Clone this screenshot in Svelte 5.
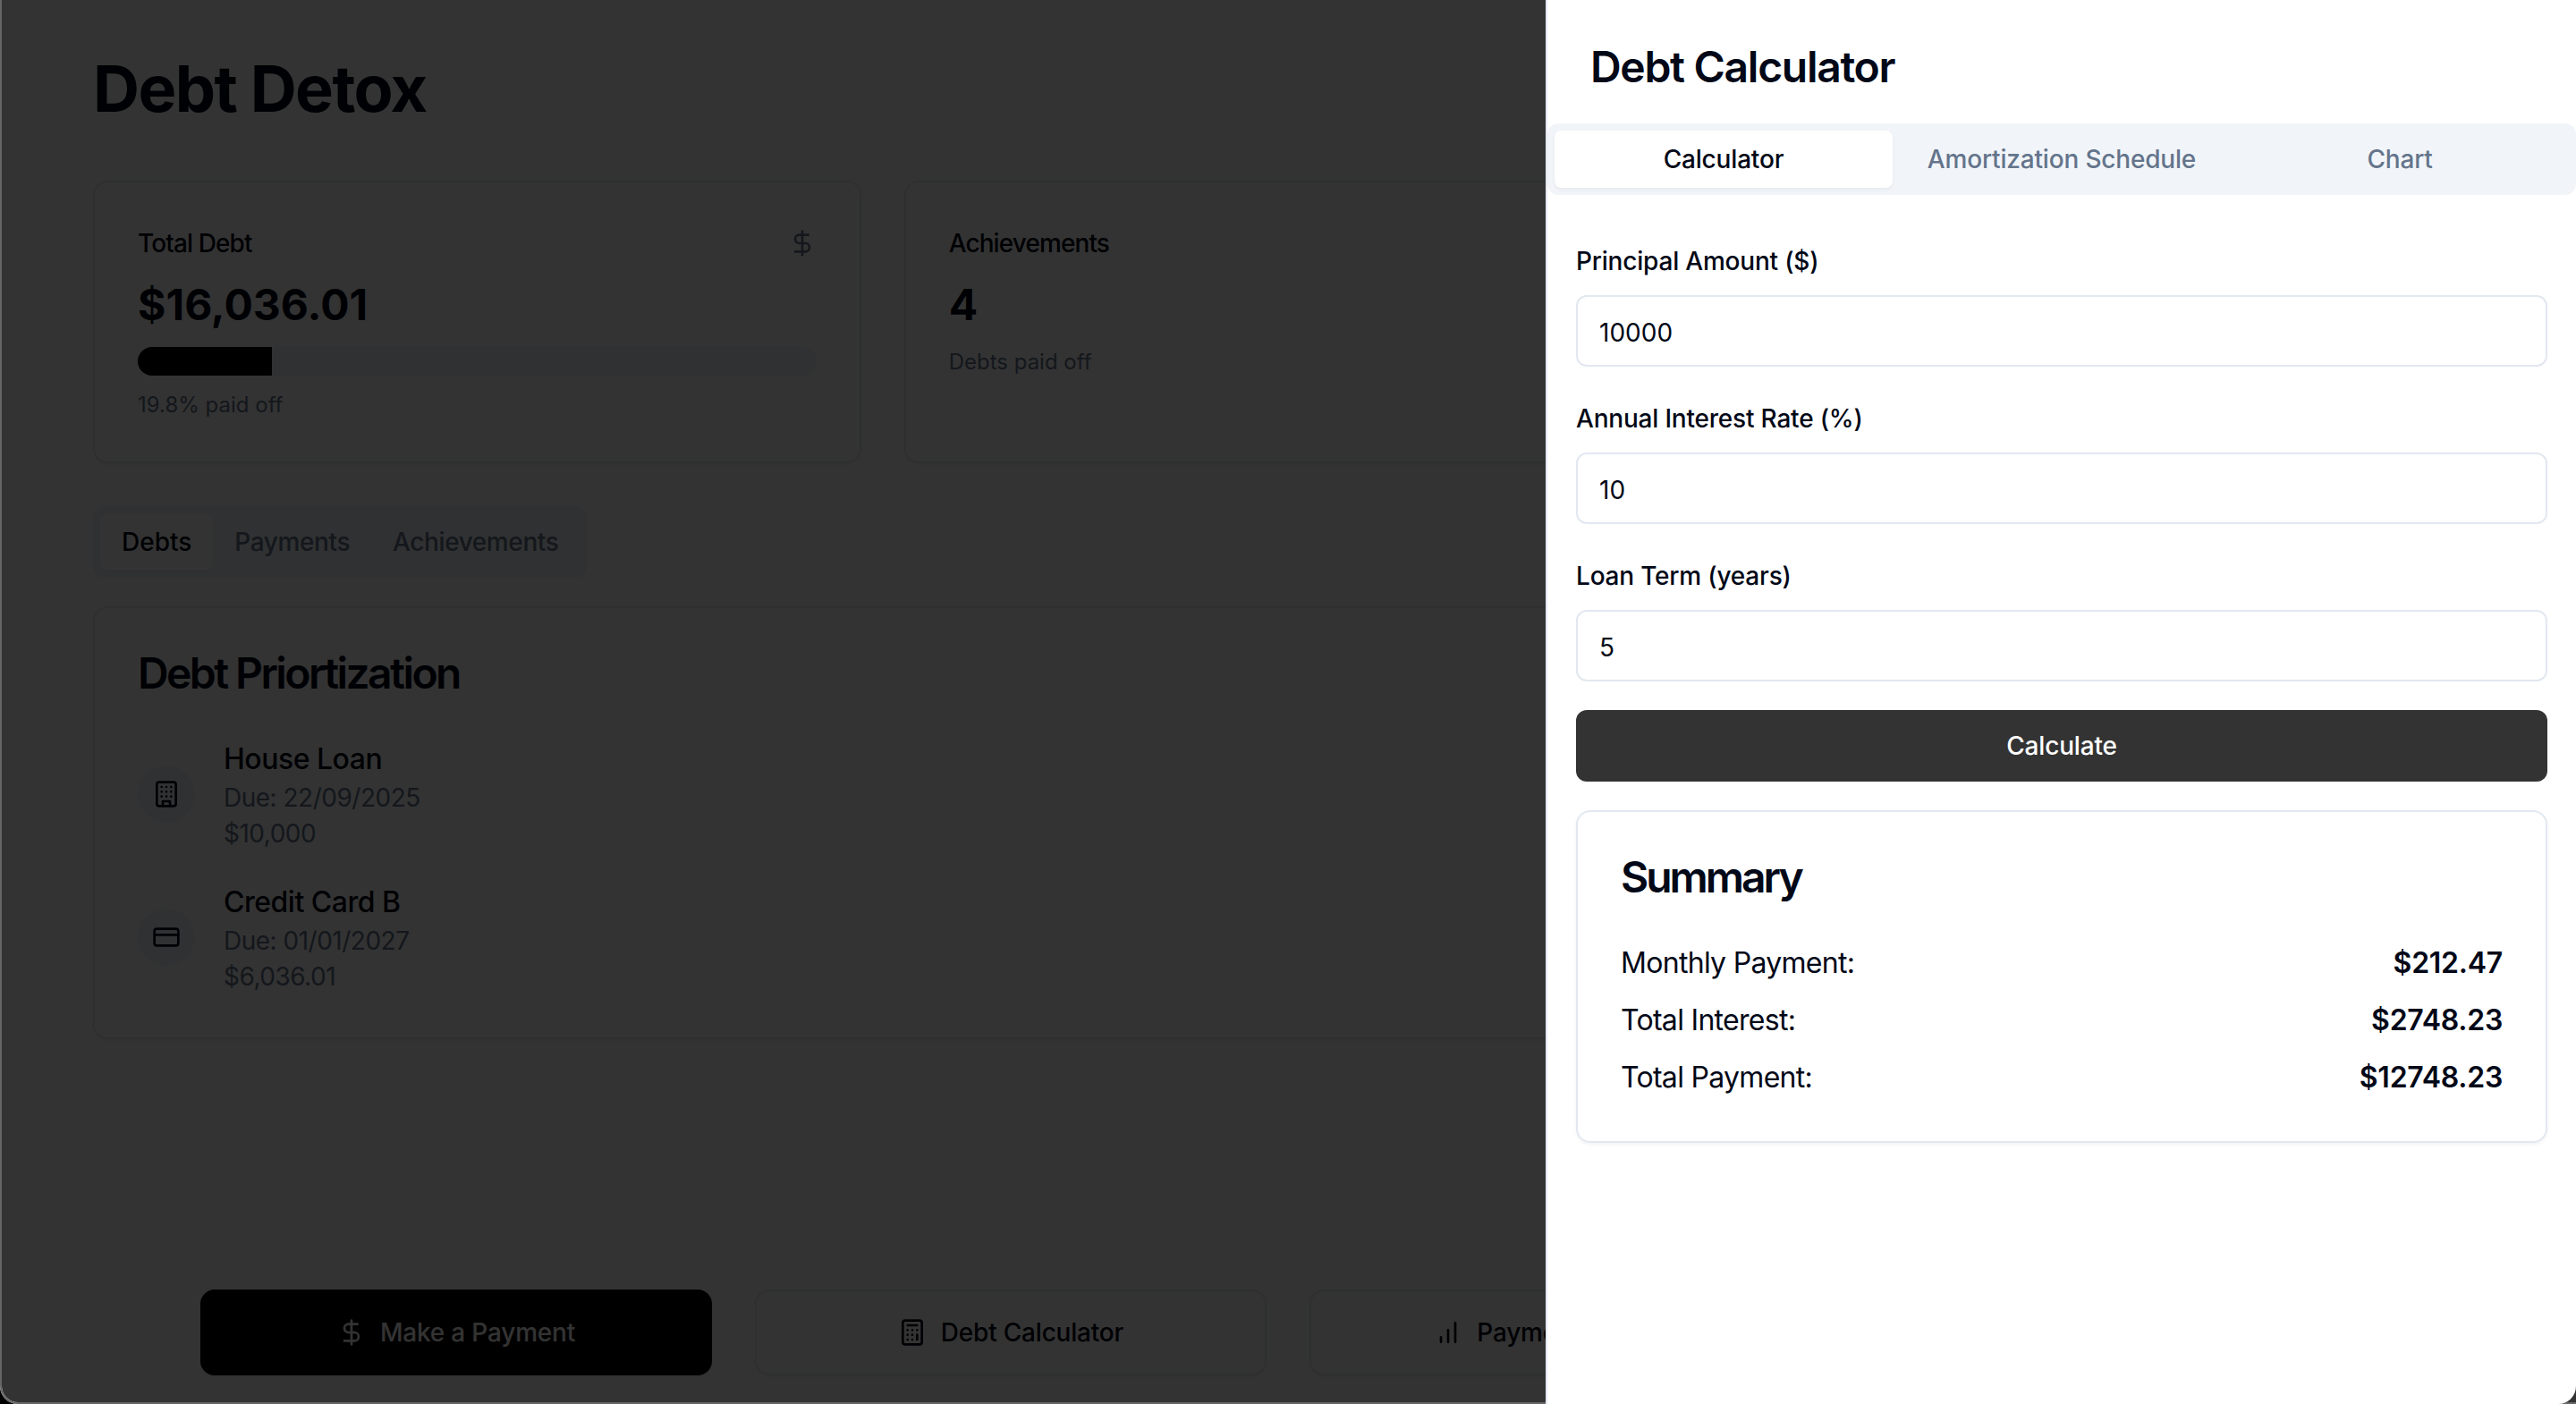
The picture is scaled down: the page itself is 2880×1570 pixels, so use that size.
<script>
  const stats = [
    { label: "Total Debt", value: "$16,036.01", progress: 19.8, note: "19.8% paid off", icon: "dollar" },
    { label: "Achievements", value: "4", note: "Debts paid off" }
  ];

  const debts = [
    { name: "House Loan", due: "22/09/2025", amount: "$10,000", icon: "building" },
    { name: "Credit Card B", due: "01/01/2027", amount: "$6,036.01", icon: "card" }
  ];

  const fields = [
    { label: "Principal Amount ($)", value: "10000" },
    { label: "Annual Interest Rate (%)", value: "10" },
    { label: "Loan Term (years)", value: "5" }
  ];

  const summary = [
    { label: "Monthly Payment:", value: "$212.47" },
    { label: "Total Interest:", value: "$2748.23" },
    { label: "Total Payment:", value: "$12748.23" }
  ];
</script>

{#snippet icon(name)}
  <svg viewBox="0 0 24 24" class="icon" fill="none" stroke="currentColor" stroke-width="2" stroke-linecap="round" stroke-linejoin="round">
    {#if name === "dollar"}
      <line x1="12" y1="2" x2="12" y2="22" />
      <path d="M17 5H9.5a3.5 3.5 0 0 0 0 7h5a3.5 3.5 0 0 1 0 7H6" />
    {:else if name === "building"}
      <rect x="4" y="2" width="16" height="20" rx="2" />
      <path d="M9 22v-4h6v4M8 6h.01M16 6h.01M12 6h.01M12 10h.01M12 14h.01M16 10h.01M16 14h.01M8 10h.01M8 14h.01" />
    {:else if name === "card"}
      <rect x="2" y="5" width="20" height="14" rx="2" />
      <line x1="2" y1="10" x2="22" y2="10" />
    {:else if name === "calculator"}
      <rect x="4" y="2" width="16" height="20" rx="2" />
      <line x1="8" y1="6" x2="16" y2="6" />
      <line x1="16" y1="14" x2="16" y2="18" />
      <path d="M16 10h.01M12 10h.01M8 10h.01M12 14h.01M8 14h.01M12 18h.01M8 18h.01" />
    {:else if name === "chart"}
      <line x1="18" y1="20" x2="18" y2="4" />
      <line x1="12" y1="20" x2="12" y2="10" />
      <line x1="6" y1="20" x2="6" y2="16" />
    {/if}
  </svg>
{/snippet}

<div class="page">
  <main class="main">
    <h1>Debt Detox</h1>

    <section class="stats">
      {#each stats as stat}
        <div class="card stat">
          <div class="stat-head">
            <span>{stat.label}</span>
            {#if stat.icon}
              <span class="muted-icon">{@render icon(stat.icon)}</span>
            {/if}
          </div>
          <div class="stat-value">{stat.value}</div>
          {#if stat.progress}
            <div class="progress"><div class="progress-fill" style="width: {stat.progress}%"></div></div>
          {/if}
          <p class="stat-note">{stat.note}</p>
        </div>
      {/each}
    </section>

    <div class="page-tabs">
      <button class="page-tab active" type="button">Debts</button>
      <button class="page-tab" type="button">Payments</button>
      <button class="page-tab" type="button">Achievements</button>
    </div>

    <section class="card debts">
      <h2>Debt Priortization</h2>
      <ul class="debt-list">
        {#each debts as debt}
          <li class="debt">
            <span class="debt-icon">{@render icon(debt.icon)}</span>
            <div>
              <div class="debt-name">{debt.name}</div>
              <div class="debt-meta">Due: {debt.due}</div>
              <div class="debt-meta">{debt.amount}</div>
            </div>
          </li>
        {/each}
      </ul>
    </section>
  </main>

  <footer class="actions">
    <button class="action primary" type="button">{@render icon("dollar")} Make a Payment</button>
    <button class="action" type="button">{@render icon("calculator")} Debt Calculator</button>
    <button class="action" type="button">{@render icon("chart")} Payment Analytics</button>
  </footer>
</div>

<div class="overlay"></div>

<aside class="sheet">
  <h2 class="sheet-title">Debt Calculator</h2>

  <div class="sheet-tabs">
    <button class="sheet-tab active" type="button">Calculator</button>
    <button class="sheet-tab" type="button">Amortization Schedule</button>
    <button class="sheet-tab" type="button">Chart</button>
  </div>

  <div class="sheet-body">
    {#each fields as field}
      <label class="field">
        <span>{field.label}</span>
        <input type="text" value={field.value} />
      </label>
    {/each}

    <button class="calculate" type="button">Calculate</button>

    <section class="summary">
      <h3>Summary</h3>
      {#each summary as row}
        <div class="summary-row">
          <span>{row.label}</span>
          <strong>{row.value}</strong>
        </div>
      {/each}
    </section>
  </div>
</aside>

<style>
  :global(body) {
    margin: 0;
    background: #000;
    color: #020817;
    font-family: Inter, "Liberation Sans", sans-serif;
  }

  button, input {
    font-family: inherit;
  }

  .page {
    height: 1570px;
    box-sizing: border-box;
    overflow: hidden;
    display: flex;
    flex-direction: column;
    background: #fff;
    border-bottom-left-radius: 20px;
  }

  .main {
    flex: 1;
    padding: 59px 104px 0;
  }

  h1 {
    margin: 0 0 63px;
    font-size: 72px;
    line-height: 80px;
    font-weight: 700;
    letter-spacing: -1.6px;
  }

  .card {
    border: 2px solid #e2e8f0;
    border-radius: 16px;
    background: #fff;
    box-shadow: 0 2px 4px rgba(0, 0, 0, 0.05);
  }

  .stats {
    display: grid;
    grid-template-columns: repeat(3, 1fr);
    gap: 48px;
  }

  .stat {
    padding: 48px;
    height: 316px;
    box-sizing: border-box;
  }

  .stat-head {
    display: flex;
    justify-content: space-between;
    align-items: center;
    height: 40px;
    margin-bottom: 16px;
    font-size: 28px;
    font-weight: 500;
    letter-spacing: -0.9px;
  }

  .muted-icon {
    display: flex;
    color: #64748b;
  }

  .icon {
    width: 32px;
    height: 32px;
    flex: none;
  }

  .stat-value {
    padding-top: 2px;
    font-size: 48px;
    line-height: 62px;
    font-weight: 700;
  }

  .progress {
    height: 32px;
    margin-top: 16px;
    border-radius: 999px;
    background: #f1f5f9;
    overflow: hidden;
  }

  .progress-fill {
    height: 100%;
    background: #000;
  }

  .stat-note {
    margin: 16px 0 0;
    padding-top: 1px;
    font-size: 24px;
    line-height: 31px;
    color: #64748b;
  }

  .page-tabs {
    display: inline-flex;
    height: 80px;
    box-sizing: border-box;
    margin: 48px 0 32px;
    padding: 8px;
    border-radius: 12px;
    background: #f1f5f9;
    vertical-align: top;
  }

  .page-tab {
    padding: 0 24px;
    border: 0;
    border-radius: 8px;
    background: none;
    color: #64748b;
    font-size: 28px;
    font-weight: 500;
    letter-spacing: -0.4px;
  }

  .page-tab.active {
    background: #fff;
    color: #020817;
    letter-spacing: 0;
    box-shadow: 0 2px 4px rgba(0, 0, 0, 0.05);
  }

  .debts {
    padding: 48px;
  }

  h2 {
    margin: 0;
    padding-top: 2px;
    font-size: 48px;
    line-height: 46px;
    font-weight: 600;
    letter-spacing: -2.6px;
  }

  .debt-list {
    list-style: none;
    margin: 48px 0 0;
    padding: 0;
    display: flex;
    flex-direction: column;
    gap: 32px;
  }

  .debt {
    display: flex;
    align-items: center;
    gap: 32px;
  }

  .debt-icon {
    width: 64px;
    height: 64px;
    border-radius: 50%;
    background: #f1f5f9;
    display: flex;
    align-items: center;
    justify-content: center;
  }

  .debt-name {
    padding-top: 2px;
    font-size: 32px;
    line-height: 46px;
    font-weight: 500;
    letter-spacing: -0.5px;
  }

  .debt-meta {
    font-size: 28px;
    line-height: 40px;
    color: #64748b;
    letter-spacing: -0.5px;
  }

  .actions {
    display: grid;
    grid-template-columns: repeat(4, 1fr);
    gap: 48px;
    padding: 0 224px 32px;
  }

  .action {
    height: 96px;
    display: flex;
    align-items: center;
    justify-content: center;
    gap: 16px;
    border: 2px solid #e2e8f0;
    border-radius: 16px;
    background: #fff;
    color: #020817;
    font-size: 28px;
    font-weight: 500;
    letter-spacing: -0.2px;
    box-shadow: 0 2px 4px rgba(0, 0, 0, 0.05);
  }

  .action.primary {
    border: 0;
    background: #000;
    color: #fff;
  }

  .overlay {
    position: fixed;
    inset: 0;
    box-sizing: border-box;
    border-left: 2px solid #666;
    border-bottom: 2px solid #666;
    border-bottom-left-radius: 20px;
    background: rgba(0, 0, 0, 0.8);
    background-clip: padding-box;
  }

  .sheet {
    position: fixed;
    top: 0;
    right: 0;
    bottom: 0;
    width: 1152px;
    box-sizing: border-box;
    border-left: 2px solid #e2e8f0;
    border-bottom-right-radius: 20px;
    background: #fff;
  }

  .sheet-title {
    margin: 0;
    padding: 48px 48px 0;
    height: 138px;
    box-sizing: border-box;
    font-size: 48px;
    line-height: 54px;
    letter-spacing: -1.3px;
  }

  .sheet-tabs {
    display: grid;
    grid-template-columns: repeat(3, 1fr);
    height: 80px;
    box-sizing: border-box;
    padding: 8px;
    border-radius: 12px;
    background: #f1f5f9;
  }

  .sheet-tab {
    border: 0;
    border-radius: 8px;
    background: none;
    color: #64748b;
    font-size: 28px;
    font-weight: 500;
    letter-spacing: -0.18px;
  }

  .sheet-tab.active {
    background: #fff;
    color: #020817;
    box-shadow: 0 2px 4px rgba(0, 0, 0, 0.05);
  }

  .sheet-body {
    padding: 54px 32px 0;
  }

  .field {
    display: block;
    margin-bottom: 38px;
    font-size: 28px;
    line-height: 40px;
    font-weight: 500;
  }

  .field span {
    display: block;
    margin-bottom: 18px;
    letter-spacing: -0.2px;
  }

  .field input {
    display: block;
    width: 100%;
    height: 80px;
    box-sizing: border-box;
    padding: 3px 24px 0;
    border: 2px solid #e2e8f0;
    border-radius: 12px;
    background: #fff;
    color: #020817;
    font-size: 28px;
  }

  .calculate {
    display: block;
    width: 100%;
    height: 80px;
    margin-top: -6px;
    border: 0;
    border-radius: 12px;
    background: #333;
    color: #fff;
    font-size: 28px;
    font-weight: 500;
    letter-spacing: -0.18px;
  }

  .summary {
    margin-top: 32px;
    padding: 48px;
    border: 2px solid #e2e8f0;
    border-radius: 16px;
    box-shadow: 0 2px 4px rgba(0, 0, 0, 0.05);
  }

  h3 {
    margin: 0 0 48px;
    padding-top: 2px;
    font-size: 48px;
    line-height: 46px;
    font-weight: 600;
    letter-spacing: -3px;
  }

  .summary-row {
    display: flex;
    justify-content: space-between;
    padding-top: 2px;
    font-size: 32px;
    line-height: 46px;
    margin-top: 16px;
    letter-spacing: -0.7px;
  }

  h3 + .summary-row {
    margin-top: 0;
  }

  .summary-row strong {
    font-weight: 600;
    letter-spacing: -0.25px;
  }
</style>
